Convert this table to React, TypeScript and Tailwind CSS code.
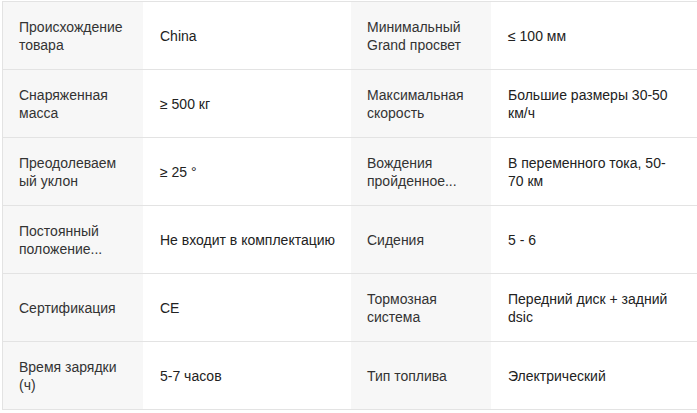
import React from "react";

const rows: [string, string, string, string][] = [
  ["Происхождение товара", "China", "Минимальный Grand просвет", "≤ 100 мм"],
  ["Снаряженная масса", "≥ 500 кг", "Максимальная скорость", "Большие размеры 30-50 км/ч"],
  ["Преодолеваемый уклон", "≥ 25 °", "Вождения пройденное...", "В переменного тока, 50-70 км"],
  ["Постоянный положение...", "Не входит в комплектацию", "Сидения", "5 - 6"],
  ["Сертификация", "CE", "Тормозная система", "Передний диск + задний dsic"],
  ["Время зарядки (ч)", "5-7 часов", "Тип топлива", "Электрический"],
];

function Label({ text }: { text: string }) {
  return (
    <div className="bg-[#f7f7f7] pl-4 pr-[19px] flex items-center h-[68px] border-b border-[#e3e3e3]">
      <span className="min-w-0 break-words leading-[18px] text-[14px] text-[#333]">{text}</span>
    </div>
  );
}

function Value({ text, wide }: { text: string; wide?: boolean }) {
  return (
    <div
      className={
        wide
          ? "bg-white pl-[17px] pr-2 flex items-center h-[68px] border-b border-[#e3e3e3]"
          : "bg-white pl-[17px] pr-[17px] flex items-center h-[68px] border-b border-[#e3e3e3]"
      }
    >
      <span className="min-w-0 break-words leading-[18px] text-[14px] text-[#222]">{text}</span>
    </div>
  );
}

export default function App() {
  return (
    <div className="w-[697px] h-[413px] bg-white pt-px pl-[2px]" style={{ fontFamily: "'Liberation Sans', Arial, sans-serif" }}>
      <div className="grid grid-cols-[140px_208px_140px_206px] border-t border-l border-[#e3e3e3]">
        {rows.map((r, i) => (
          <React.Fragment key={i}>
            <Label text={r[0]} />
            <Value text={r[1]} wide />
            <Label text={r[2]} />
            <Value text={r[3]} />
          </React.Fragment>
        ))}
      </div>
    </div>
  );
}
